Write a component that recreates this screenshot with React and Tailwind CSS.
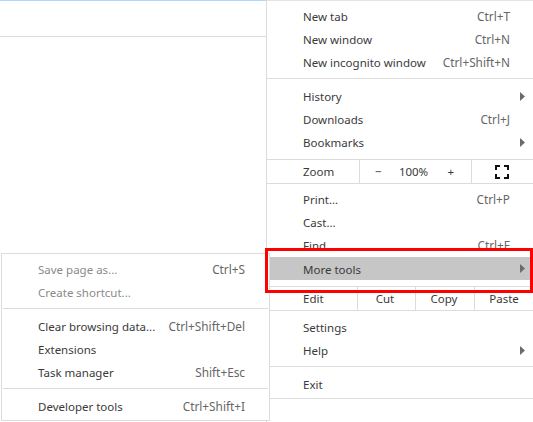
import React from "react";

const Arrow = () => (
  <svg width="5" height="9" viewBox="0 0 5 9" className="absolute right-[8px] top-[7px]">
    <path d="M0 0L5 4.5L0 9Z" fill="#6b6b6b" />
  </svg>
);

const FullscreenIcon = () => (
  <svg width="14" height="14" viewBox="0 0 14 14" fill="none" stroke="#111" strokeWidth="2">
    <path d="M1 5V1H5M9 1H13V5M13 9V13H9M5 13H1V9" />
  </svg>
);

// baris menu biasa
const Row = ({ label, shortcut, arrow, disabled, active, sub }) => (
  <div
    className={`relative flex h-[23px] items-center justify-between pl-[36px] ${sub ? "pr-[24px]" : "pr-[23px]"} ${active ? "bg-[#c6c6c6] pt-[2px]" : ""} ${disabled ? "text-[#8a8a8a]" : "text-[#3a3a3a]"}`}
  >
    <span>{label}</span>
    {shortcut && <span className="text-[11.8px] text-[#666]">{shortcut}</span>}
    {arrow && <Arrow />}
  </div>
);

const Sep = ({ className = "" }) => <div className={`h-px bg-[#dcdcdc] ${className}`}></div>;

const App = () => {
  return (
    <div className="relative flex h-[422px] w-[533px] overflow-hidden bg-white font-['Noto_Sans',sans-serif] text-[11.5px] leading-none">
      {/* halaman di belakang menu */}
      <div className="w-[266px] shrink-0">
        <div className="h-px bg-[#b3d7fb]"></div>
        <div className="h-[35px]"></div>
        <Sep />
      </div>

      {/* menu utama */}
      <div className="flex-1 border-l border-[#dcdcdc]">
        <div className="h-px bg-[#e4e4e4]"></div>
        <div className="pt-[4px]">
          <Row label="New tab" shortcut="Ctrl+T" />
          <Row label="New window" shortcut="Ctrl+N" />
          <Row label="New incognito window" shortcut="Ctrl+Shift+N" />
        </div>
        <Sep className="mt-[4px]" />
        <div className="pt-[6px]">
          <Row label="History" arrow />
          <Row label="Downloads" shortcut="Ctrl+J" />
          <Row label="Bookmarks" arrow />
        </div>
        <Sep className="mt-[5px]" />

        <div className="flex h-[23px] items-center text-[#3a3a3a]">
          <div className="flex h-full w-[93px] items-center border-r border-[#dcdcdc] pl-[36px]">Zoom</div>
          <div className="flex h-full w-[112px] items-center border-r border-[#dcdcdc]">
            <span className="w-[37px] text-center">−</span>
            <span className="w-[34px] text-center">100%</span>
            <span className="w-[41px] text-center">+</span>
          </div>
          <div className="flex flex-1 justify-end pr-[24px]">
            <FullscreenIcon />
          </div>
        </div>
        <Sep />

        <div className="pt-[4px]">
          <Row label="Print..." shortcut="Ctrl+P" />
          <Row label="Cast..." />
          <Row label="Find..." shortcut="Ctrl+F" />
          <Row label="More tools" arrow active />
        </div>
        <Sep className="mt-[6px]" />

        <div className="flex h-[23px] items-center text-[#3a3a3a]">
          <div className="flex h-full w-[91px] items-center border-r border-[#dcdcdc] pl-[36px]">Edit</div>
          <div className="flex h-full w-[58px] items-center justify-center border-r border-[#dcdcdc] pr-[3px]">Cut</div>
          <div className="flex h-full w-[59px] items-center justify-center border-r border-[#dcdcdc] pr-[2px]">Copy</div>
          <div className="flex h-full flex-1 items-center justify-center">Paste</div>
        </div>
        <Sep />

        <div className="pt-[5px]">
          <Row label="Settings" />
          <Row label="Help" arrow />
        </div>
        <Sep className="mt-[4px]" />
        <div className="pt-[6px]">
          <Row label="Exit" />
        </div>
        <Sep className="mt-[2px]" />
      </div>

      {/* submenu More tools */}
      <div className="absolute left-px top-[253px] h-[168px] w-[269px] border border-[#dcdcdc] bg-white">
        <div className="pt-[4px]">
          <Row label="Save page as..." shortcut="Ctrl+S" disabled sub />
          <Row label="Create shortcut..." disabled sub />
        </div>
        <Sep className="mx-px mt-[4px]" />
        <div className="pt-[6px]">
          <Row label="Clear browsing data..." shortcut="Ctrl+Shift+Del" sub />
          <Row label="Extensions" sub />
          <Row label="Task manager" shortcut="Shift+Esc" sub />
        </div>
        <Sep className="mx-px mt-[4px]" />
        <div className="pt-[6px]">
          <Row label="Developer tools" shortcut="Ctrl+Shift+I" sub />
        </div>
      </div>

      {/* kotak merah penanda */}
      <div className="absolute left-[265px] top-[248px] h-[45px] w-[268px] border-[3.5px] border-[#f00]"></div>
    </div>
  );
};

export default App;
